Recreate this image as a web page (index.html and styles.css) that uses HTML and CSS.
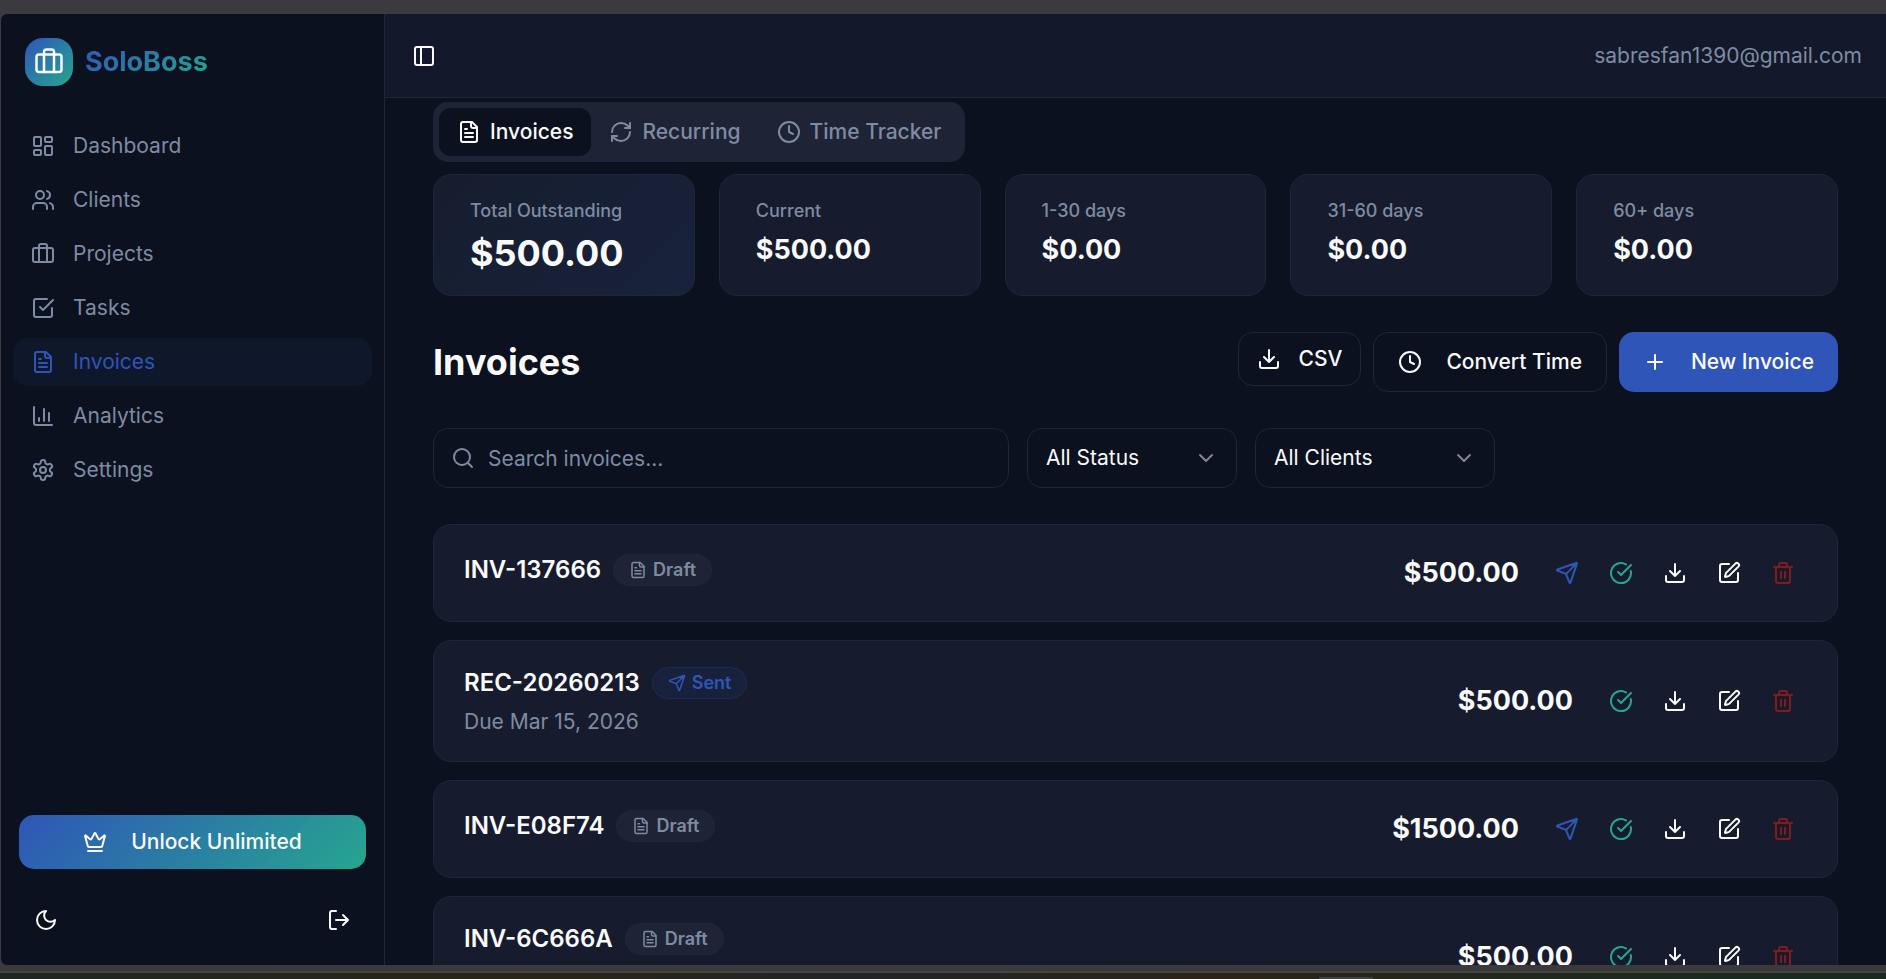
FILE: index.html
```html
<!DOCTYPE html>
<html lang="en">
<head>
<meta charset="utf-8">
<meta name="viewport" content="width=device-width, initial-scale=1">
<title>SoloBoss - Invoices</title>
<link rel="stylesheet" href="styles.css">
</head>
<body>
<svg class="sprite" aria-hidden="true">
  <symbol id="i-briefcase" viewBox="0 0 24 24"><path d="M8 6V4a2 2 0 0 1 2-2h4a2 2 0 0 1 2 2v16M8 6v14"/><rect width="20" height="14" x="2" y="6" rx="2"/></symbol>
  <symbol id="i-dashboard" viewBox="0 0 24 24"><rect width="7" height="9" x="3" y="3" rx="1"/><rect width="7" height="5" x="14" y="3" rx="1"/><rect width="7" height="9" x="14" y="12" rx="1"/><rect width="7" height="5" x="3" y="16" rx="1"/></symbol>
  <symbol id="i-users" viewBox="0 0 24 24"><path d="M16 21v-2a4 4 0 0 0-4-4H6a4 4 0 0 0-4 4v2"/><circle cx="9" cy="7" r="4"/><path d="M22 21v-2a4 4 0 0 0-3-3.87M16 3.13a4 4 0 0 1 0 7.75"/></symbol>
  <symbol id="i-tasks" viewBox="0 0 24 24"><path d="m9 11 3 3L22 4"/><path d="M21 12v7a2 2 0 0 1-2 2H5a2 2 0 0 1-2-2V5a2 2 0 0 1 2-2h11"/></symbol>
  <symbol id="i-file" viewBox="0 0 24 24"><path d="M15 2H6a2 2 0 0 0-2 2v16a2 2 0 0 0 2 2h12a2 2 0 0 0 2-2V7Z"/><path d="M14 2v4a2 2 0 0 0 2 2h4M10 9H8M16 13H8M16 17H8"/></symbol>
  <symbol id="i-chart" viewBox="0 0 24 24"><path d="M3 3v16a2 2 0 0 0 2 2h16M18 17V9M13 17V5M8 17v-3"/></symbol>
  <symbol id="i-settings" viewBox="0 0 24 24"><path d="M12.22 2h-.44a2 2 0 0 0-2 2v.18a2 2 0 0 1-1 1.73l-.43.25a2 2 0 0 1-2 0l-.15-.08a2 2 0 0 0-2.73.73l-.22.38a2 2 0 0 0 .73 2.73l.15.1a2 2 0 0 1 1 1.72v.51a2 2 0 0 1-1 1.74l-.15.09a2 2 0 0 0-.73 2.73l.22.38a2 2 0 0 0 2.73.73l.15-.08a2 2 0 0 1 2 0l.43.25a2 2 0 0 1 1 1.73V20a2 2 0 0 0 2 2h.44a2 2 0 0 0 2-2v-.18a2 2 0 0 1 1-1.73l.43-.25a2 2 0 0 1 2 0l.15.08a2 2 0 0 0 2.73-.73l.22-.39a2 2 0 0 0-.73-2.73l-.15-.08a2 2 0 0 1-1-1.74v-.5a2 2 0 0 1 1-1.74l.15-.09a2 2 0 0 0 .73-2.73l-.22-.38a2 2 0 0 0-2.73-.73l-.15.08a2 2 0 0 1-2 0l-.43-.25a2 2 0 0 1-1-1.73V4a2 2 0 0 0-2-2z"/><circle cx="12" cy="12" r="3"/></symbol>
  <symbol id="i-crown" viewBox="0 0 24 24"><path d="M11.562 3.266a.5.5 0 0 1 .876 0L15.39 8.87a1 1 0 0 0 1.516.294L21.183 5.5a.5.5 0 0 1 .798.519l-2.834 10.246a1 1 0 0 1-.956.734H5.81a1 1 0 0 1-.957-.734L2.02 6.02a.5.5 0 0 1 .798-.519l4.276 3.664a1 1 0 0 0 1.516-.294zM5 21h14"/></symbol>
  <symbol id="i-moon" viewBox="0 0 24 24"><path d="M12 3a6 6 0 0 0 9 9 9 9 0 1 1-9-9Z"/></symbol>
  <symbol id="i-logout" viewBox="0 0 24 24"><path d="M9 21H5a2 2 0 0 1-2-2V5a2 2 0 0 1 2-2h4M16 17l5-5-5-5M21 12H9"/></symbol>
  <symbol id="i-panel" viewBox="0 0 24 24"><rect width="18" height="18" x="3" y="3" rx="2"/><path d="M9 3v18"/></symbol>
  <symbol id="i-refresh" viewBox="0 0 24 24"><path d="M3 12a9 9 0 0 1 9-9 9.75 9.75 0 0 1 6.74 2.74L21 8"/><path d="M21 3v5h-5M21 12a9 9 0 0 1-9 9 9.75 9.75 0 0 1-6.74-2.74L3 16"/><path d="M8 16H3v5"/></symbol>
  <symbol id="i-clock" viewBox="0 0 24 24"><circle cx="12" cy="12" r="10"/><path d="M12 6v6l4 2"/></symbol>
  <symbol id="i-download" viewBox="0 0 24 24"><path d="M21 15v4a2 2 0 0 1-2 2H5a2 2 0 0 1-2-2v-4M7 10l5 5 5-5M12 15V3"/></symbol>
  <symbol id="i-plus" viewBox="0 0 24 24"><path d="M5 12h14M12 5v14"/></symbol>
  <symbol id="i-search" viewBox="0 0 24 24"><circle cx="11" cy="11" r="8"/><path d="m21 21-4.3-4.3"/></symbol>
  <symbol id="i-chevron" viewBox="0 0 24 24"><path d="m6 9 6 6 6-6"/></symbol>
  <symbol id="i-send" viewBox="0 0 24 24"><path d="M14.536 21.686a.5.5 0 0 0 .937-.024l6.5-19a.496.496 0 0 0-.635-.635l-19 6.5a.5.5 0 0 0-.024.937l7.93 3.18a2 2 0 0 1 1.112 1.11zM21.854 2.147l-10.94 10.939"/></symbol>
  <symbol id="i-check" viewBox="0 0 24 24"><path d="M21.801 10A10 10 0 1 1 17 3.335"/><path d="m9 11 3 3L22 4"/></symbol>
  <symbol id="i-edit" viewBox="0 0 24 24"><path d="M12 3H5a2 2 0 0 0-2 2v14a2 2 0 0 0 2 2h14a2 2 0 0 0 2-2v-7"/><path d="M18.375 2.625a1 1 0 0 1 3 3l-9.013 9.014a2 2 0 0 1-.853.505l-2.873.84a.5.5 0 0 1-.62-.62l.84-2.873a2 2 0 0 1 .506-.852z"/></symbol>
  <symbol id="i-trash" viewBox="0 0 24 24"><path d="M3 6h18M19 6v14c0 1-1 2-2 2H7c-1 0-2-1-2-2V6M8 6V4c0-1 1-2 2-2h4c1 0 2 1 2 2v2M10 11v6M14 11v6"/></symbol>
</svg>

<div class="window">
  <aside class="sidebar">
    <div class="brand">
      <span class="logo"><svg class="logo-icon"><use href="#i-briefcase"/></svg></span>
      <span class="brand-name">SoloBoss</span>
    </div>
    <nav class="nav" aria-label="Main">
      <a class="nav-item" href="#dashboard"><svg class="icon"><use href="#i-dashboard"/></svg>Dashboard</a>
      <a class="nav-item" href="#clients"><svg class="icon"><use href="#i-users"/></svg>Clients</a>
      <a class="nav-item" href="#projects"><svg class="icon"><use href="#i-briefcase"/></svg>Projects</a>
      <a class="nav-item" href="#tasks"><svg class="icon"><use href="#i-tasks"/></svg>Tasks</a>
      <a class="nav-item active" href="#invoices" aria-current="page"><svg class="icon"><use href="#i-file"/></svg>Invoices</a>
      <a class="nav-item" href="#analytics"><svg class="icon"><use href="#i-chart"/></svg>Analytics</a>
      <a class="nav-item" href="#settings"><svg class="icon"><use href="#i-settings"/></svg>Settings</a>
    </nav>
    <div class="sidebar-foot">
      <button class="upgrade" type="button"><svg class="icon"><use href="#i-crown"/></svg>Unlock Unlimited</button>
      <div class="foot-row">
        <button class="icon-btn" type="button" aria-label="Toggle theme"><svg class="icon"><use href="#i-moon"/></svg></button>
        <button class="icon-btn" type="button" aria-label="Log out"><svg class="icon"><use href="#i-logout"/></svg></button>
      </div>
    </div>
  </aside>

  <div class="main">
    <header class="topbar">
      <button class="icon-btn" type="button" aria-label="Toggle sidebar"><svg class="icon"><use href="#i-panel"/></svg></button>
      <span class="email">sabresfan1390@gmail.com</span>
    </header>

    <main class="content">
      <div class="tabs" role="tablist">
        <button class="tab selected" type="button" role="tab" aria-selected="true"><svg class="icon"><use href="#i-file"/></svg>Invoices</button>
        <button class="tab" type="button" role="tab" aria-selected="false"><svg class="icon"><use href="#i-refresh"/></svg>Recurring</button>
        <button class="tab" type="button" role="tab" aria-selected="false"><svg class="icon"><use href="#i-clock"/></svg>Time Tracker</button>
      </div>

      <section class="stats" aria-label="Outstanding totals">
        <div class="stat total"><p class="stat-label">Total Outstanding</p><p class="stat-value">$500.00</p></div>
        <div class="stat"><p class="stat-label">Current</p><p class="stat-value">$500.00</p></div>
        <div class="stat"><p class="stat-label">1-30 days</p><p class="stat-value">$0.00</p></div>
        <div class="stat"><p class="stat-label">31-60 days</p><p class="stat-value">$0.00</p></div>
        <div class="stat"><p class="stat-label">60+ days</p><p class="stat-value">$0.00</p></div>
      </section>

      <div class="heading">
        <h1 class="title">Invoices</h1>
        <div class="heading-actions">
          <button class="btn small" type="button"><svg class="icon"><use href="#i-download"/></svg>CSV</button>
          <button class="btn" type="button"><svg class="icon"><use href="#i-clock"/></svg>Convert Time</button>
          <button class="btn primary" type="button"><svg class="icon"><use href="#i-plus"/></svg>New Invoice</button>
        </div>
      </div>

      <div class="filters">
        <div class="field search">
          <input class="control" type="search" placeholder="Search invoices..." aria-label="Search invoices">
          <svg class="icon field-icon"><use href="#i-search"/></svg>
        </div>
        <div class="field status">
          <select class="control" aria-label="Status"><option>All Status</option></select>
          <svg class="icon field-icon"><use href="#i-chevron"/></svg>
        </div>
        <div class="field client">
          <select class="control" aria-label="Client"><option>All Clients</option></select>
          <svg class="icon field-icon"><use href="#i-chevron"/></svg>
        </div>
      </div>

      <section class="invoices" aria-label="Invoice list">
        <article class="invoice">
          <div class="details">
            <div class="name-row"><h2 class="number">INV-137666</h2><span class="badge"><svg class="badge-icon"><use href="#i-file"/></svg>Draft</span></div>
          </div>
          <span class="amount">$500.00</span>
          <div class="actions">
            <button class="icon-btn send" type="button" aria-label="Send"><svg class="icon"><use href="#i-send"/></svg></button>
            <button class="icon-btn paid" type="button" aria-label="Mark paid"><svg class="icon"><use href="#i-check"/></svg></button>
            <button class="icon-btn" type="button" aria-label="Download"><svg class="icon"><use href="#i-download"/></svg></button>
            <button class="icon-btn" type="button" aria-label="Edit"><svg class="icon"><use href="#i-edit"/></svg></button>
            <button class="icon-btn delete" type="button" aria-label="Delete"><svg class="icon"><use href="#i-trash"/></svg></button>
          </div>
        </article>
        <article class="invoice">
          <div class="details">
            <div class="name-row"><h2 class="number">REC-20260213</h2><span class="badge sent"><svg class="badge-icon"><use href="#i-send"/></svg>Sent</span></div>
            <p class="due">Due Mar 15, 2026</p>
          </div>
          <span class="amount">$500.00</span>
          <div class="actions">
            <button class="icon-btn paid" type="button" aria-label="Mark paid"><svg class="icon"><use href="#i-check"/></svg></button>
            <button class="icon-btn" type="button" aria-label="Download"><svg class="icon"><use href="#i-download"/></svg></button>
            <button class="icon-btn" type="button" aria-label="Edit"><svg class="icon"><use href="#i-edit"/></svg></button>
            <button class="icon-btn delete" type="button" aria-label="Delete"><svg class="icon"><use href="#i-trash"/></svg></button>
          </div>
        </article>
        <article class="invoice">
          <div class="details">
            <div class="name-row"><h2 class="number">INV-E08F74</h2><span class="badge"><svg class="badge-icon"><use href="#i-file"/></svg>Draft</span></div>
          </div>
          <span class="amount">$1500.00</span>
          <div class="actions">
            <button class="icon-btn send" type="button" aria-label="Send"><svg class="icon"><use href="#i-send"/></svg></button>
            <button class="icon-btn paid" type="button" aria-label="Mark paid"><svg class="icon"><use href="#i-check"/></svg></button>
            <button class="icon-btn" type="button" aria-label="Download"><svg class="icon"><use href="#i-download"/></svg></button>
            <button class="icon-btn" type="button" aria-label="Edit"><svg class="icon"><use href="#i-edit"/></svg></button>
            <button class="icon-btn delete" type="button" aria-label="Delete"><svg class="icon"><use href="#i-trash"/></svg></button>
          </div>
        </article>
        <article class="invoice">
          <div class="details">
            <div class="name-row"><h2 class="number">INV-6C666A</h2><span class="badge"><svg class="badge-icon"><use href="#i-file"/></svg>Draft</span></div>
            <p class="due"></p>
          </div>
          <span class="amount">$500.00</span>
          <div class="actions">
            <button class="icon-btn paid" type="button" aria-label="Mark paid"><svg class="icon"><use href="#i-check"/></svg></button>
            <button class="icon-btn" type="button" aria-label="Download"><svg class="icon"><use href="#i-download"/></svg></button>
            <button class="icon-btn" type="button" aria-label="Edit"><svg class="icon"><use href="#i-edit"/></svg></button>
            <button class="icon-btn delete" type="button" aria-label="Delete"><svg class="icon"><use href="#i-trash"/></svg></button>
          </div>
        </article>
      </section>
    </main>
  </div>
</div>
<div class="desktop-edge"></div>
</body>
</html>
```
FILE: styles.css
```css
:root {
  --bg: #0b111e;
  --bar: #13192a;
  --card: #161c2d;
  --border: #1f2638;
  --muted-bg: #1e2435;
  --text: #fafafa;
  --muted: #7f8ba3;
  --primary: #2f55b8;
  --accent: #26a68f;
  --danger: #821c1c;
}

* {
  box-sizing: border-box;
}

body {
  margin: 0;
  height: 100vh;
  padding-top: 14px;
  display: flex;
  flex-direction: column;
  overflow: hidden;
  background: #3b3a3e;
  color: var(--text);
  font: 400 21px/30px Inter, "Liberation Sans", sans-serif;
}

h1,
h2,
p {
  margin: 0;
}

button,
input,
select {
  font: inherit;
  color: inherit;
}

button {
  border: 0;
  background: none;
  padding: 0;
  cursor: pointer;
}

a {
  color: inherit;
  text-decoration: none;
}

.sprite {
  display: none;
}

svg {
  fill: none;
  stroke: currentColor;
  stroke-width: 2;
  stroke-linecap: round;
  stroke-linejoin: round;
  flex-shrink: 0;
}

.icon {
  width: 24px;
  height: 24px;
}

.icon-btn {
  width: 48px;
  height: 48px;
  display: flex;
  align-items: center;
  justify-content: center;
}

.window {
  flex: 1;
  min-height: 0;
  margin-left: 1px;
  display: flex;
  overflow: hidden;
  border-radius: 6px 0 0 6px;
  background: var(--bg);
}

.desktop-edge {
  height: 14px;
  border-top: 6px solid #3a3a3d;
  background: linear-gradient(#444540, #444540) top / 100% 2px no-repeat,
    linear-gradient(#3f3f3c, #3f3f3c) 72% 100% / 54px 2px no-repeat,
    linear-gradient(90deg, #1f2621, #2a2518 28%, #222326 45%, #2b2419 66%, #1a2a20 92%);
}

/* Sidebar */

.sidebar {
  width: 384px;
  flex-shrink: 0;
  display: flex;
  flex-direction: column;
  border-right: 1px solid var(--border);
}

.brand {
  display: flex;
  align-items: center;
  gap: 12px;
  padding: 24px;
}

.logo {
  width: 48px;
  height: 48px;
  display: flex;
  align-items: center;
  justify-content: center;
  border-radius: 18px;
  background: linear-gradient(135deg, var(--primary), var(--accent));
}

.logo-icon {
  width: 30px;
  height: 30px;
}

.brand-name {
  font-size: 27px;
  line-height: 42px;
  font-weight: 700;
  color: transparent;
  background: linear-gradient(135deg, var(--primary), var(--accent));
  background-clip: text;
}

.nav {
  flex: 1;
  display: flex;
  flex-direction: column;
  gap: 6px;
  padding: 12px;
}

.nav-item {
  height: 48px;
  display: flex;
  align-items: center;
  gap: 18px;
  padding: 0 18px;
  border-radius: 15px;
  color: var(--muted);
}

.nav-item.active {
  background: #0f172b;
  color: var(--primary);
}

.sidebar-foot {
  display: flex;
  flex-direction: column;
  gap: 27px;
  padding: 0 18px 21px;
}

.upgrade {
  height: 54px;
  display: flex;
  align-items: center;
  justify-content: center;
  gap: 24px;
  border-radius: 15px;
  background: linear-gradient(135deg, var(--primary), var(--accent));
  font-weight: 500;
}

.foot-row {
  display: flex;
  justify-content: space-between;
  padding: 0 3px;
}

/* Main column */

.main {
  flex: 1;
  min-width: 0;
  display: flex;
  flex-direction: column;
}

.topbar {
  height: 84px;
  flex-shrink: 0;
  display: flex;
  align-items: center;
  justify-content: space-between;
  padding: 0 24px 0 15px;
  border-bottom: 1px solid var(--border);
  background: var(--bar);
}

.email {
  color: var(--muted);
}

.content {
  flex: 1;
  min-height: 0;
  overflow: hidden;
  padding: 4px 48px 0;
}

.tabs {
  width: fit-content;
  display: flex;
  padding: 6px;
  border-radius: 15px;
  background: var(--muted-bg);
}

.tab {
  height: 48px;
  display: flex;
  align-items: center;
  gap: 9px;
  padding: 0 18px;
  border-radius: 12px;
  color: var(--muted);
  font-weight: 500;
}

.tab.selected {
  background: var(--bg);
  color: var(--text);
}

.stats {
  display: grid;
  grid-template-columns: repeat(5, 1fr);
  gap: 24px;
  margin-top: 12px;
}

.stat {
  padding: 24px 36px 18px;
  border: 1px solid var(--border);
  border-radius: 18px;
  background: var(--card);
}

.stat.total {
  background: linear-gradient(135deg, #161d2e, #18223c);
}

.stat-label {
  margin-bottom: 6px;
  font-size: 18px;
  line-height: 24px;
  font-weight: 500;
  color: var(--muted);
}

.stat-value {
  font-size: 27px;
  line-height: 42px;
  font-weight: 700;
}

.total .stat-value {
  font-size: 36px;
  line-height: 48px;
}

.heading {
  display: flex;
  align-items: center;
  justify-content: space-between;
  margin-top: 36px;
}

.title {
  font-size: 36px;
  line-height: 48px;
  font-weight: 700;
}

.heading-actions {
  display: flex;
  align-items: flex-start;
  gap: 12px;
}

.btn {
  height: 60px;
  display: flex;
  align-items: center;
  gap: 24px;
  padding: 0 24px;
  border: 1px solid var(--border);
  border-radius: 15px;
  font-weight: 500;
}

.btn.small {
  height: 54px;
  gap: 18px;
  padding: 0 18px;
}

.btn.primary {
  border: 0;
  background: var(--primary);
}

.filters {
  display: flex;
  gap: 18px;
  margin-top: 36px;
}

.field {
  display: grid;
  align-items: center;
}

.search {
  width: 576px;
}

.status {
  width: 210px;
}

.client {
  width: 240px;
}

.control {
  grid-area: 1 / 1;
  width: 100%;
  height: 60px;
  padding: 0 18px;
  border: 1px solid var(--border);
  border-radius: 15px;
  background: var(--bg);
  appearance: none;
}

.search .control {
  padding-left: 54px;
}

.control::placeholder {
  color: var(--muted);
  opacity: 1;
}

.field-icon {
  grid-area: 1 / 1;
  justify-self: end;
  margin: 0 19px;
  color: #83868c;
  pointer-events: none;
}

.search .field-icon {
  justify-self: start;
  margin: 0 18px;
  color: var(--muted);
}

/* Invoice list */

.invoices {
  display: flex;
  flex-direction: column;
  gap: 18px;
  margin-top: 36px;
}

.invoice {
  display: flex;
  align-items: center;
  gap: 24px;
  padding: 24px 30px;
  border: 1px solid var(--border);
  border-radius: 18px;
  background: var(--card);
}

.details {
  flex: 1;
}

.name-row {
  display: flex;
  align-items: center;
  gap: 12px;
  margin-bottom: 6px;
}

.number {
  font-size: 24px;
  line-height: 36px;
  font-weight: 600;
}

.badge {
  display: flex;
  align-items: center;
  gap: 6px;
  padding: 3px 15px;
  border: 1px solid #1f2838;
  border-radius: 16px;
  background: var(--muted-bg);
  color: var(--muted);
  font-size: 18px;
  line-height: 24px;
  font-weight: 600;
}

.badge.sent {
  border-color: #1b2c58;
  background: #18213c;
  color: var(--primary);
}

.badge-icon {
  width: 18px;
  height: 18px;
}

.due {
  min-height: 30px;
  color: var(--muted);
}

.amount {
  font-size: 27px;
  line-height: 42px;
  font-weight: 700;
}

.actions {
  display: flex;
  gap: 6px;
}

.send {
  color: var(--primary);
}

.paid {
  color: var(--accent);
}

.delete {
  color: var(--danger);
}
```
